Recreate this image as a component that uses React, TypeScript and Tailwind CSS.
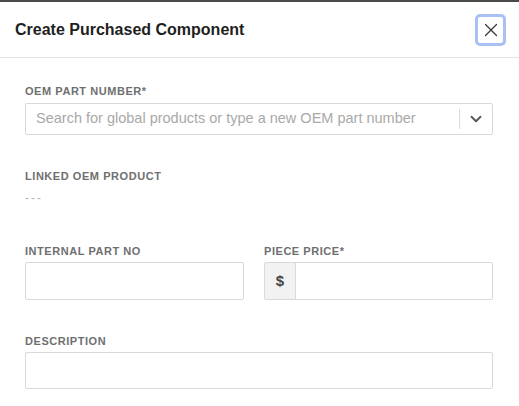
import { X, ChevronDown } from 'lucide-react'

const labelCls = 'block text-[11px] leading-[11px] font-bold tracking-[0.05em] text-[#6f6f6f] uppercase'
const inputCls = 'block w-full border border-[#d9d9d9] rounded-[2px] bg-white outline-none px-3 text-[14px]'

export default function App() {
  return (
    <div className="w-[519px] h-[406px] bg-white border-t-2 border-[#4a4a4a] overflow-hidden font-['Liberation_Sans',Arial,sans-serif] text-[#222]">
      {/* Header */}
      <div className="h-[56px] flex items-center justify-between pl-[15px] pr-[13px] border-b border-[#e3e3e3]">
        <h2 className="text-[16px] font-bold text-[#1f1f1f]">Create Purchased Component</h2>
        <button className="w-[31px] h-[32px] flex items-center justify-center rounded-[5px] border-[3px] border-[#a9c1f2] bg-white text-[#333]">
          <X className="w-[22px] h-[22px]" strokeWidth={1.3} />
        </button>
      </div>

      <div className="pl-[25px] pr-[26px] pt-[28px]">
        {/* OEM part number */}
        <label className={labelCls}>OEM Part Number*</label>
        <div className="mt-[6px] h-[32px] flex items-center border border-[#d9d9d9] rounded-[2px]">
          <span className="flex-1 min-w-0 pl-[10px] text-[14.5px] text-[#a9a9a9] truncate">
            Search for global products or type a new OEM part number
          </span>
          <div className="w-px h-[20px] bg-[#dcdcdc]" />
          <div className="w-[32px] flex items-center justify-center text-[#555]">
            <ChevronDown className="w-[18px] h-[18px]" strokeWidth={2.4} />
          </div>
        </div>

        {/* Linked OEM product */}
        <div className="mt-[36px]">
          <label className={labelCls}>Linked OEM Product</label>
          <div className="mt-[10px] text-[12px] tracking-[2px] text-[#b5b5b5] leading-none">---</div>
        </div>

        {/* Internal part no / piece price */}
        <div className="mt-[42px] grid grid-cols-[219px_229px] gap-[20px]">
          <div>
            <label className={labelCls}>Internal Part No</label>
            <input className={inputCls + ' mt-[5px] h-[38px]'} />
          </div>
          <div>
            <label className={labelCls}>Piece Price*</label>
            <div className="mt-[5px] h-[38px] flex border border-[#d9d9d9] rounded-[2px]">
              <span className="w-[31px] shrink-0 flex items-center justify-center bg-[#f2f2f2] border-r border-[#d9d9d9] text-[15px] font-bold text-[#444]">$</span>
              <input className="w-0 min-w-0 flex-1 outline-none px-3 text-[14px]" />
            </div>
          </div>
        </div>

        {/* Description */}
        <div className="mt-[36px]">
          <label className={labelCls}>Description</label>
          <input className={inputCls + ' mt-[5px] h-[37px]'} />
        </div>
      </div>
    </div>
  )
}
